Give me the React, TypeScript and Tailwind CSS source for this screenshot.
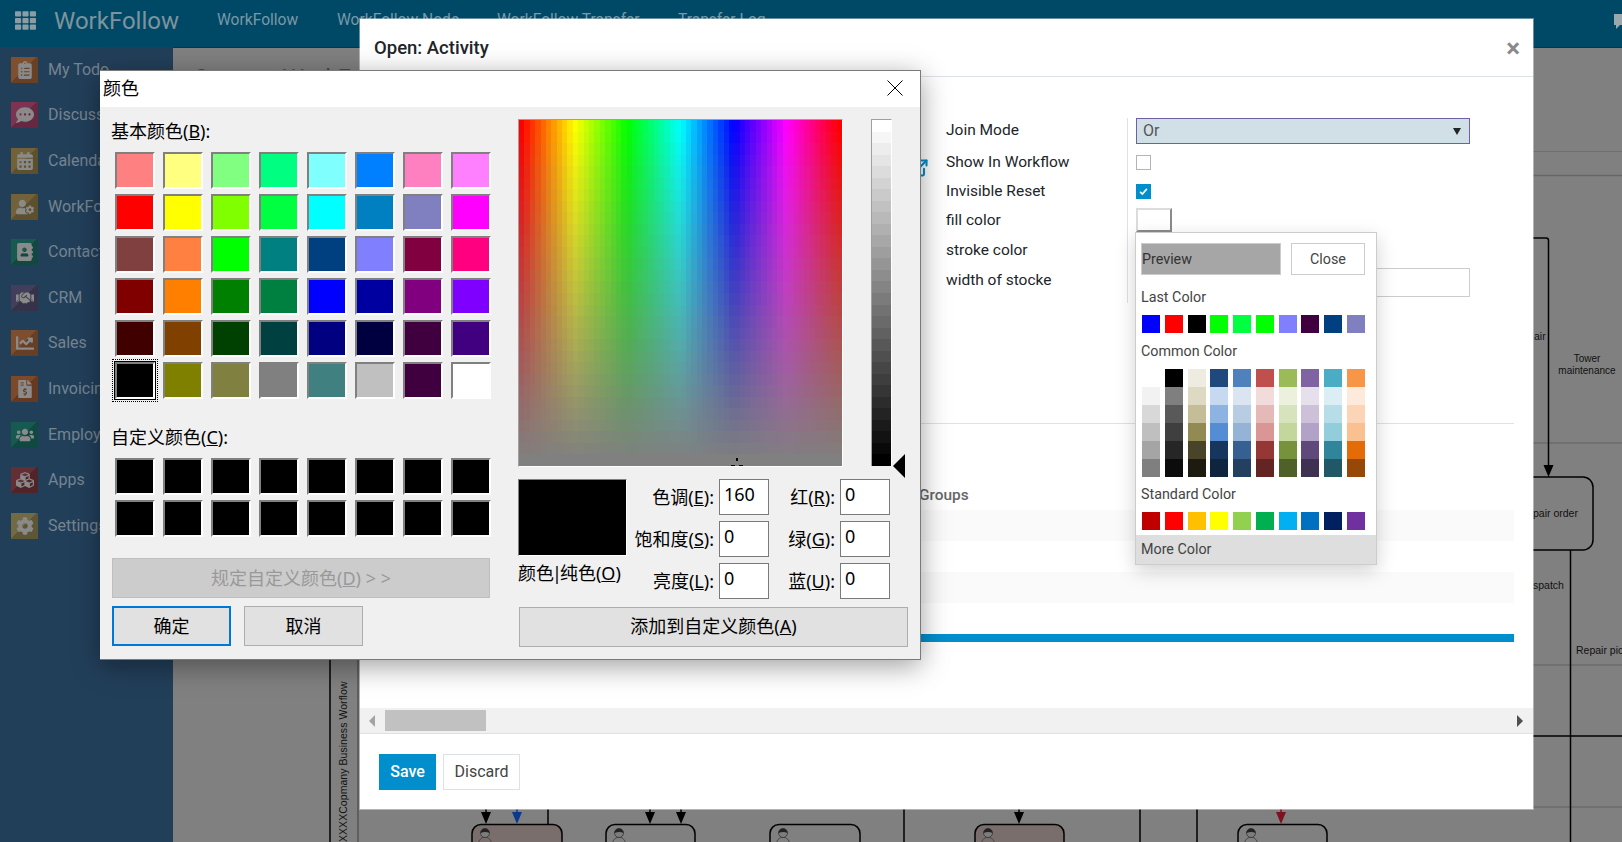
import { ExternalLink } from "lucide-react";
import {
  FaAddressBook,
  FaCalendarAlt,
  FaChartLine,
  FaClipboardList,
  FaCog,
  FaCommentDots,
  FaCubes,
  FaFileInvoiceDollar,
  FaHandshake,
  FaTh,
  FaUserCog,
  FaUsers,
} from "react-icons/fa";

const sidebarItems = [
  { label: "My Todo", icon: FaClipboardList, tone: "bg-[#7c4d2b]" },
  { label: "Discuss", icon: FaCommentDots, tone: "bg-[#7a2f4f]" },
  { label: "Calendar", icon: FaCalendarAlt, tone: "bg-[#6f5f36]" },
  { label: "WorkFollow", icon: FaUserCog, tone: "bg-[#6f5f36]" },
  { label: "Contacts", icon: FaAddressBook, tone: "bg-[#14564f]" },
  { label: "CRM", icon: FaHandshake, tone: "bg-[#3f3b58]" },
  { label: "Sales", icon: FaChartLine, tone: "bg-[#7a4b2b]" },
  { label: "Invoicing", icon: FaFileInvoiceDollar, tone: "bg-[#7a4526]" },
  { label: "Employees", icon: FaUsers, tone: "bg-[#12574f]" },
  { label: "Apps", icon: FaCubes, tone: "bg-[#5f2b30]" },
  { label: "Settings", icon: FaCog, tone: "bg-[#6e6740]" },
];

const navItems = [
  { label: "WorkFollow", width: "w-[120px]" },
  { label: "WorkFollow Node", width: "w-[160px]" },
  { label: "WorkFollow Transfer", width: "w-[181px]" },
  { label: "Transfer Log", width: "w-[120px]" },
];

const basicColors = [
  "bg-[#ff8080]", "bg-[#ffff80]", "bg-[#80ff80]", "bg-[#00ff80]", "bg-[#80ffff]", "bg-[#0080ff]", "bg-[#ff80c0]", "bg-[#ff80ff]",
  "bg-[#ff0000]", "bg-[#ffff00]", "bg-[#80ff00]", "bg-[#00ff40]", "bg-[#00ffff]", "bg-[#0080c0]", "bg-[#8080c0]", "bg-[#ff00ff]",
  "bg-[#804040]", "bg-[#ff8040]", "bg-[#00ff00]", "bg-[#008080]", "bg-[#004080]", "bg-[#8080ff]", "bg-[#800040]", "bg-[#ff0080]",
  "bg-[#800000]", "bg-[#ff8000]", "bg-[#008000]", "bg-[#008040]", "bg-[#0000ff]", "bg-[#0000a0]", "bg-[#800080]", "bg-[#8000ff]",
  "bg-[#400000]", "bg-[#804000]", "bg-[#004000]", "bg-[#004040]", "bg-[#000080]", "bg-[#000040]", "bg-[#400040]", "bg-[#400080]",
  "bg-[#000000]", "bg-[#808000]", "bg-[#808040]", "bg-[#808080]", "bg-[#408080]", "bg-[#c0c0c0]", "bg-[#400040]", "bg-[#ffffff]",
];

const lastColors = [
  "bg-[#0000ff]", "bg-[#ff0000]", "bg-[#000000]", "bg-[#00ff00]", "bg-[#00ff40]",
  "bg-[#00ff00]", "bg-[#8080ff]", "bg-[#400040]", "bg-[#004080]", "bg-[#8080c0]",
];

const commonColumns = [
  ["bg-[#ffffff]", "bg-[#f2f2f2]", "bg-[#d8d8d8]", "bg-[#bfbfbf]", "bg-[#a5a5a5]", "bg-[#7f7f7f]"],
  ["bg-[#000000]", "bg-[#7f7f7f]", "bg-[#595959]", "bg-[#3f3f3f]", "bg-[#262626]", "bg-[#0c0c0c]"],
  ["bg-[#eeece1]", "bg-[#ddd9c3]", "bg-[#c4bd97]", "bg-[#938953]", "bg-[#494429]", "bg-[#1d1b10]"],
  ["bg-[#1f497d]", "bg-[#c6d9f0]", "bg-[#8db3e2]", "bg-[#548dd4]", "bg-[#17365d]", "bg-[#0f243e]"],
  ["bg-[#4f81bd]", "bg-[#dbe5f1]", "bg-[#b8cce4]", "bg-[#95b3d7]", "bg-[#366092]", "bg-[#244061]"],
  ["bg-[#c0504d]", "bg-[#f2dcdb]", "bg-[#e5b9b7]", "bg-[#d99694]", "bg-[#953734]", "bg-[#632423]"],
  ["bg-[#9bbb59]", "bg-[#ebf1dd]", "bg-[#d7e3bc]", "bg-[#c3d69b]", "bg-[#76923c]", "bg-[#4f6128]"],
  ["bg-[#8064a2]", "bg-[#e5e0ec]", "bg-[#ccc1d9]", "bg-[#b2a2c7]", "bg-[#5f497a]", "bg-[#3f3151]"],
  ["bg-[#4bacc6]", "bg-[#dbeef3]", "bg-[#b7dde8]", "bg-[#92cddc]", "bg-[#31859b]", "bg-[#205867]"],
  ["bg-[#f79646]", "bg-[#fdeada]", "bg-[#fbd5b5]", "bg-[#fac08f]", "bg-[#e36c09]", "bg-[#974806]"],
];

const standardColors = [
  "bg-[#c00000]", "bg-[#ff0000]", "bg-[#ffc000]", "bg-[#ffff00]", "bg-[#92d050]",
  "bg-[#00b050]", "bg-[#00b0f0]", "bg-[#0070c0]", "bg-[#002060]", "bg-[#7030a0]",
];

const hueFields = [
  { label: "色调", key: "E", value: "160" },
  { label: "饱和度", key: "S", value: "0" },
  { label: "亮度", key: "L", value: "0" },
];

const rgbFields = [
  { label: "红", key: "R", value: "0" },
  { label: "绿", key: "G", value: "0" },
  { label: "蓝", key: "U", value: "0" },
];

function Sidebar() {
  return (
    <aside className="-mt-[1px] flex w-[173px] shrink-0 flex-col bg-[#223f5a]">
      {sidebarItems.map((item) => (
        <div key={item.label} className="flex h-[45.6px] items-center gap-[10px] pl-[11px] text-[16px] text-[#75848f]">
          <span
            className={`flex h-[26px] w-[27px] items-center justify-center bg-[linear-gradient(135deg,rgba(255,255,255,0.02)_48%,rgba(0,0,0,0.16)_48%)] ${item.tone}`}
          >
            <item.icon className="size-[18px] text-[#8a8a8a]" />
          </span>
          {item.label}
        </div>
      ))}
    </aside>
  );
}

function Person({ x }: { x: number }) {
  return (
    <g>
      <path d={`M${x + 3} 846 q0 -8 7 -9 q7 1 7 9`} fill="none" stroke="#4a4a4a" strokeWidth={1} />
      <circle cx={x + 10} cy={833} r={4.5} fill="#7d7d7d" stroke="#333" strokeWidth={0.8} />
      <path d={`M${x + 5.500} 833 a4.500 4.500 0 0 1 9 0 q-4 -2 -9 0 Z`} fill="#222" />
    </g>
  );
}

function Arrow({ x, from, to, color = "#000" }: { x: number; from: number; to: number; color?: string }) {
  return (
    <g>
      <line x1={x} y1={from} x2={x} y2={to - 6} stroke={color} strokeWidth={1.5} />
      <path d={`M${x - 5} ${to - 12} L${x + 5} ${to - 12} L${x} ${to} Z`} fill={color} />
    </g>
  );
}

// the workflow canvas behind the modal, in page coordinates
function Diagram() {
  const boxes = [
    { x: 472, w: 90, fill: "#7a6e6c" },
    { x: 606, w: 89, fill: "none" },
    { x: 770, w: 90, fill: "none" },
    { x: 975, w: 89, fill: "#7a6e6c" },
    { x: 1238, w: 89, fill: "none" },
  ];
  return (
    <svg className="absolute inset-0 size-full" viewBox="173 48 1449 794">
      <line x1={1533} y1={151.5} x2={1622} y2={151.5} stroke="#6f6f6f" />
      <line x1={1533} y1={175.5} x2={1622} y2={175.5} stroke="#666" strokeWidth={1.5} />
      <line x1={1533} y1={443} x2={1622} y2={443} stroke="#6b6b6b" strokeWidth={1.5} />
      <line x1={1533} y1={665} x2={1622} y2={665} stroke="#6b6b6b" strokeWidth={1.5} />
      <line x1={1533} y1={807} x2={1622} y2={807} stroke="#6b6b6b" strokeWidth={1.5} />
      <line x1={1533} y1={736} x2={1622} y2={736} stroke="#000" strokeWidth={1.5} />
      <line x1={330} y1={640} x2={330} y2={842} stroke="#000" strokeWidth={1.5} />
      <line x1={358} y1={640} x2={358} y2={842} stroke="#555" strokeWidth={1.5} />
      <text transform="translate(347 842) rotate(-90)" fontFamily="Liberation Sans, sans-serif" fontSize={10.5} fill="#111" letterSpacing={0.05}>
        XXXXCopmany Business Worflow
      </text>
      <path d="M1533 238 H1546 q2.500 0 2.500 2.500 V300" fill="none" stroke="#000" strokeWidth={1.5} />
      <Arrow x={1548.5} from={300} to={477} />
      <rect x={1480} y={477} width={113} height={73} rx={10} fill="none" stroke="#000" strokeWidth={1.5} />
      <line x1={1570.500} y1={550} x2={1570.500} y2={842} stroke="#000" strokeWidth={1.5} />
      <g fontFamily="Liberation Sans, sans-serif" fontSize={10.5} fill="#111">
        <text x={1534} y={340}>air</text>
        <text x={1587} y={362} textAnchor="middle" fontSize={10}>Tower</text>
        <text x={1587} y={374} textAnchor="middle" fontSize={10}>maintenance</text>
        <text x={1533} y={517}>pair order</text>
        <text x={1533} y={589}>spatch</text>
        <text x={1576} y={654}>Repair pick</text>
      </g>
      {boxes.map((b) => (
        <g key={b.x}>
          <rect x={b.x} y={824.500} width={b.w} height={40} rx={9} fill={b.fill} stroke="#000" strokeWidth={1.5} />
          <Person x={b.x + 3} />
        </g>
      ))}
      <line x1={548} y1={805} x2={548} y2={824} stroke="#000" strokeWidth={1.5} />
      <line x1={904} y1={805} x2={904} y2={842} stroke="#000" strokeWidth={1.5} />
      <line x1={1140} y1={805} x2={1140} y2={842} stroke="#000" strokeWidth={1.5} />
      <line x1={1197} y1={805} x2={1197} y2={842} stroke="#000" strokeWidth={1.5} />
      <Arrow x={486} from={805} to={824} />
      <Arrow x={517} from={805} to={824} color="#0a3a8c" />
      <Arrow x={650} from={805} to={824} />
      <Arrow x={681} from={805} to={824} />
      <Arrow x={1019} from={805} to={824} />
      <Arrow x={1281} from={805} to={824} color="#7a1220" />
    </svg>
  );
}

function FormRow({
  height,
  leading,
  pad,
  label,
  children,
  aside,
}: {
  height: string;
  leading: string;
  pad: string;
  label: string;
  children?: React.ReactNode;
  aside?: React.ReactNode;
}) {
  return (
    <div className={`flex ${height}`}>
      <div className="flex w-[567px] justify-end pr-[17px] pt-[10px]">{aside}</div>
      <div className={`w-[181px] text-[15.5px] text-[#212529] ${leading}`}>{label}</div>
      <div className={`flex flex-1 items-start border-l border-[#dee2e6] pl-[8px] pr-[44px] ${pad}`}>{children}</div>
    </div>
  );
}

function ActivityModal() {
  return (
    <div className="absolute left-[360px] top-[19px] flex h-[790px] w-[1173px] flex-col bg-white font-['Roboto',sans-serif] shadow-[0_0_0_1px_rgba(255,255,255,0.4)]">
      <header className="flex h-[58px] shrink-0 items-center justify-between border-b border-[#dee2e6] pl-[14px] pr-[13px]">
        <h2 className="pt-[2px] text-[18.500px] font-medium text-[#212529]">Open: Activity</h2>
        <span className="text-[26px] font-bold leading-none text-[#8a8a8a]">×</span>
      </header>

      <div className="h-[631px] shrink-0 overflow-hidden px-[19px] pt-[41px]">
        <div className="flex flex-col">
          <FormRow height="h-[30px]" leading="leading-[24px]" pad="" label="Join Mode">
            <div className="flex h-[26px] w-full items-center justify-between border border-[#6f5fa6] bg-[#d1dfe6] pl-[6px] pr-[8px] text-[16px] text-[#555555]">
              Or
              <span className="h-0 w-0 border-x-[4px] border-t-[7px] border-x-transparent border-t-[#212529]" />
            </div>
          </FormRow>
          <FormRow
            height="h-[28px]"
            leading="leading-[28px]"
            pad="pt-[7px]"
            label="Show In Workflow"
            aside={<ExternalLink className="size-[20px] text-[#008fcc]" strokeWidth={2.5} />}
          >
            <span className="size-[15px] border border-[#adb5bd] bg-white" />
          </FormRow>
          <FormRow height="h-[29px]" leading="leading-[30px]" pad="pt-[8px]" label="Invisible Reset">
            <span className="flex size-[15px] items-center justify-center bg-[#008fcc]">
              <svg viewBox="0 0 12 12" className="size-[9px]">
                <path d="M1.500 6.500 L4.500 9.500 L10.500 2.500" fill="none" stroke="#fff" strokeWidth={2.2} />
              </svg>
            </span>
          </FormRow>
          <FormRow height="h-[28px]" leading="leading-[30px]" pad="pt-[3px]" label="fill color">
            <span className="h-[24px] w-[36px] border-2 border-[#dcdcdc] border-b-[#8a8a8a] border-r-[#8a8a8a] bg-white" />
          </FormRow>
          <FormRow height="h-[32px]" leading="leading-[34px]" pad="" label="stroke color" />
          <FormRow height="h-[38px]" leading="leading-[30px]" pad="pt-[3px]" label="width of stocke">
            <span className="h-[29px] w-full border border-[#cccccc]" />
          </FormRow>
        </div>

        <div className="mt-[120px] border-t border-[#dee2e6]" />
        <div className="ml-[540px] mt-[60px] h-[22px] text-[15.400px] font-medium leading-[22px] text-[#666666]">Groups</div>
        <div className="mt-[4px] h-[31px] bg-[#fafafa]" />
        <div className="mt-[31px] h-[31px] bg-[#fafafa]" />
        <div className="mt-[31px] h-[8px] bg-[#008fcc]" />
      </div>

      <div className="flex h-[25px] shrink-0 items-center bg-[#f1f1f1] pl-[9px] pr-[10px]">
        <span className="h-0 w-0 border-y-[6px] border-r-[6px] border-y-transparent border-r-[#a3a3a3]" />
        <span className="ml-[10px] h-[21px] w-[101px] bg-[#c1c1c1]" />
        <span className="ml-auto h-0 w-0 border-y-[6px] border-l-[6px] border-y-transparent border-l-[#505050]" />
      </div>

      <footer className="flex flex-1 items-start gap-[7px] border-t border-[#dee2e6] pl-[19px] pt-[20px] text-[16px]">
        <button className="h-[36px] w-[57px] bg-[#008fcc] font-medium text-white">Save</button>
        <button className="h-[36px] w-[77px] border border-[#dee2e6] bg-white text-[#444444]">Discard</button>
      </footer>

      <ColorPopup />
    </div>
  );
}

function SwatchRow({ colors }: { colors: string[] }) {
  return (
    <div className="mx-[1px] flex justify-between">
      {colors.map((c, i) => (
        <span key={i} className={`size-[18px] ${c}`} />
      ))}
    </div>
  );
}

// palette that hangs under the fill color button
function ColorPopup() {
  return (
    <div className="absolute left-[775px] top-[213px] flex h-[333px] w-[242px] flex-col border border-[#cccccc] bg-white text-[14.300px] text-[#444444] shadow-[0_6px_18px_rgba(0,0,0,0.18)]">
      <div className="flex gap-[10px] pl-[5px] pr-[10px] pt-[10px]">
        <div className="flex h-[32px] w-[140px] items-center border border-[#cccccc] bg-[#a6a6a6] pt-[1px] text-[#333333]">Preview</div>
        <div className="flex h-[32px] w-[74px] items-center justify-center border border-[#cccccc] pt-[1px]">Close</div>
      </div>
      <div className="flex flex-1 flex-col pl-[5px] pr-[10px]">
        <div className="mt-[12px] h-[21px] leading-[21px]">Last Color</div>
        <div className="mt-[7px]">
          <SwatchRow colors={lastColors} />
        </div>
        <div className="mt-[8px] h-[20px] leading-[20px]">Common Color</div>
        <div className="mx-[1px] mt-[8px] flex justify-between">
          {commonColumns.map((col, i) => (
            <div key={i} className="flex flex-col">
              {col.map((c) => (
                <span key={c} className={`size-[18px] ${c}`} />
              ))}
            </div>
          ))}
        </div>
        <div className="mt-[7px] h-[20px] leading-[20px]">Standard Color</div>
        <div className="mt-[8px]">
          <SwatchRow colors={standardColors} />
        </div>
      </div>
      <div className="flex h-[29px] items-center bg-[#dedede] pl-[5px]">More Color</div>
    </div>
  );
}

function Sunken({ color, className = "" }: { color: string; className?: string }) {
  return (
    <span
      className={`block h-[37px] w-[40px] border-2 border-b-[#ffffff] border-l-[#808080] border-r-[#ffffff] border-t-[#808080] ${color} ${className}`}
    />
  );
}

function Spectrum() {
  const cols = 60;
  const rows = 30;
  const cells = [];
  for (let y = 0; y < rows; y++) {
    for (let x = 0; x < cols; x++) {
      const hue = (x / (cols - 1)) * 360;
      const sat = 100 - (y / (rows - 1)) * 100;
      cells.push(<rect key={`${x}-${y}`} x={x} y={y} width={1.02} height={1.02} fill={`hsl(${hue} ${sat}% 50%)`} />);
    }
  }
  return (
    <div className="relative h-[348px] w-[325px] shrink-0 border border-[#a0a0a0] border-b-white border-r-white">
      <svg viewBox={`0 0 ${cols} ${rows}`} preserveAspectRatio="none" shapeRendering="crispEdges" className="size-full">
        {cells}
      </svg>
      {/* crosshair sitting on the bottom edge */}
      <span className="absolute bottom-0 left-[217px] h-[3px] w-[2px] -translate-y-[5px] bg-black" />
      <span className="absolute bottom-0 left-[212px] h-[1px] w-[4px] bg-black" />
      <span className="absolute bottom-0 left-[220px] h-[1px] w-[4px] bg-black" />
    </div>
  );
}

function LuminanceBar() {
  const steps = Array.from({ length: 30 }, (_, i) => Math.round(255 - (i / 29) * 255));
  return (
    <div className="relative ml-[28px] flex h-[347px] w-[21px] flex-col border border-b-0 border-[#a0a0a0] border-r-white">
      {steps.map((v) => (
        <span key={v} className="flex-1" style={{ backgroundColor: `rgb(${v} ${v} ${v})` }} />
      ))}
      <span className="absolute -bottom-[12px] left-[21px] h-0 w-0 border-y-[12px] border-r-[12px] border-y-transparent border-r-black" />
    </div>
  );
}

function Field({ label, accel, value, labelWidth }: { label: string; accel: string; value: string; labelWidth: string }) {
  return (
    <div className="flex h-[36px] items-center">
      <span className={`${labelWidth} shrink-0 whitespace-nowrap pr-[5px] text-right`}>
        {label}(<u>{accel}</u>):
      </span>
      <span className="h-[36px] w-[50px] border border-[#7a7a7a] bg-white pl-[4px] leading-[28px]">{value}</span>
    </div>
  );
}

function ColorDialog() {
  return (
    <div className="absolute left-[100px] top-[70px] flex h-[590px] w-[821px] flex-col border border-[#7a7a7a] border-l-0 bg-[#f0f0f0] font-['Noto_Sans','Noto_Sans_CJK_SC',sans-serif] text-[18px] text-black shadow-[0_6px_26px_rgba(0,0,0,0.38)]">
      <div className="flex h-[36px] shrink-0 items-center justify-between bg-white pb-[2px] pl-[3px] pr-[17px]">
        <span>颜色</span>
        <svg viewBox="0 0 16 16" className="size-[16px]">
          <path d="M0.500 0.500 L15.500 15.500 M15.500 0.500 L0.500 15.500" stroke="#000" strokeWidth={1} />
        </svg>
      </div>

      <div className="flex flex-1">
        <div className="w-[418px] shrink-0 pl-[11px]">
          <div className="mt-[13px] h-[22px] leading-[22px]">
            基本颜色(<u>B</u>):
          </div>
          <div className="ml-[4px] mt-[10px] grid w-[376px] grid-cols-8 gap-x-[8px] gap-y-[5px]">
            {basicColors.map((c, i) => (
              <Sunken
                key={i}
                color={c}
                className={i === 40 ? "shadow-[0_0_0_1px_#000] outline-1 outline-offset-[2px] outline-black outline-dotted" : ""}
              />
            ))}
          </div>
          <div className="mt-[27px] h-[22px] leading-[22px]">
            自定义颜色(<u>C</u>):
          </div>
          <div className="ml-[4px] mt-[10px] grid w-[376px] grid-cols-8 gap-x-[8px] gap-y-[5px]">
            {Array.from({ length: 16 }, (_, i) => (
              <Sunken key={i} color="bg-[#000000]" />
            ))}
          </div>
          <div className="ml-[1px] mt-[21px] flex h-[40px] w-[378px] items-center justify-center border border-[#bfbfbf] bg-[#cccccc] whitespace-pre text-[#999999]">
            规定自定义颜色(<u>D</u>) {"> >"}
          </div>
          <div className="ml-[1px] mt-[8px] flex gap-[13px]">
            <button className="h-[40px] w-[119px] border-2 border-[#0078d7] bg-[#e1e1e1]">确定</button>
            <button className="h-[40px] w-[119px] border border-[#adadad] bg-[#e1e1e1]">取消</button>
          </div>
        </div>

        <div className="flex-1 pt-[12px]">
          <div className="flex">
            <Spectrum />
            <LuminanceBar />
          </div>
          <div className="mt-[12px] flex">
            <div className="w-[109px] shrink-0">
              <div className="h-[77px] border border-[#808080] border-b-white border-r-white bg-black" />
              <div className="mt-[6px] h-[22px] whitespace-nowrap leading-[22px]">
                颜色<span className="-mx-[2px]">|</span>纯色(<u>O</u>)
              </div>
            </div>
            <div className="flex w-[142px] shrink-0 flex-col gap-[6px]">
              {hueFields.map((f) => (
                <Field key={f.key} label={f.label} accel={f.key} value={f.value} labelWidth="w-[92px]" />
              ))}
            </div>
            <div className="flex flex-col gap-[6px]">
              {rgbFields.map((f) => (
                <Field key={f.key} label={f.label} accel={f.key} value={f.value} labelWidth="w-[71px]" />
              ))}
            </div>
          </div>
          <button className="ml-[1px] mt-[8px] h-[40px] w-[389px] border border-[#adadad] bg-[#e1e1e1] pb-[2px]">
            添加到自定义颜色(<u>A</u>)
          </button>
        </div>
      </div>
    </div>
  );
}

export default function App() {
  return (
    <div className="relative flex h-[842px] w-[1622px] flex-col overflow-hidden bg-[#808080] font-['Roboto',sans-serif]">
      <header className="flex h-[48px] shrink-0 items-center border-b border-[#003a52] bg-[#004966] pb-[6px] text-[#7a98a6]">
        <FaTh className="ml-[15px] size-[21px] text-[#8a9ca4]" />
        <span className="ml-[18px] w-[163px] text-[24px] leading-none text-[#7d939d]">WorkFollow</span>
        {navItems.map((n) => (
          <span key={n.label} className={`${n.width} whitespace-nowrap text-[15.6px]`}>
            {n.label}
          </span>
        ))}
        <svg viewBox="0 0 20 18" className="absolute left-[1612px] top-[13px] w-[20px]">
          <path d="M2 1 H18 V12 H8 L4 16 V12 H2 Z" fill="#9aa7ad" />
        </svg>
      </header>

      <div className="flex flex-1">
        <Sidebar />
        <main className="relative flex-1">
          <h1 className="pl-[20px] pt-[12px] text-[24px] text-[#2f5266]">Custom WorkFollow</h1>
        </main>
      </div>

      <div className="pointer-events-none absolute inset-x-0 bottom-0 left-[173px] top-[48px]">
        <Diagram />
      </div>

      <ActivityModal />
      <ColorDialog />
    </div>
  );
}
